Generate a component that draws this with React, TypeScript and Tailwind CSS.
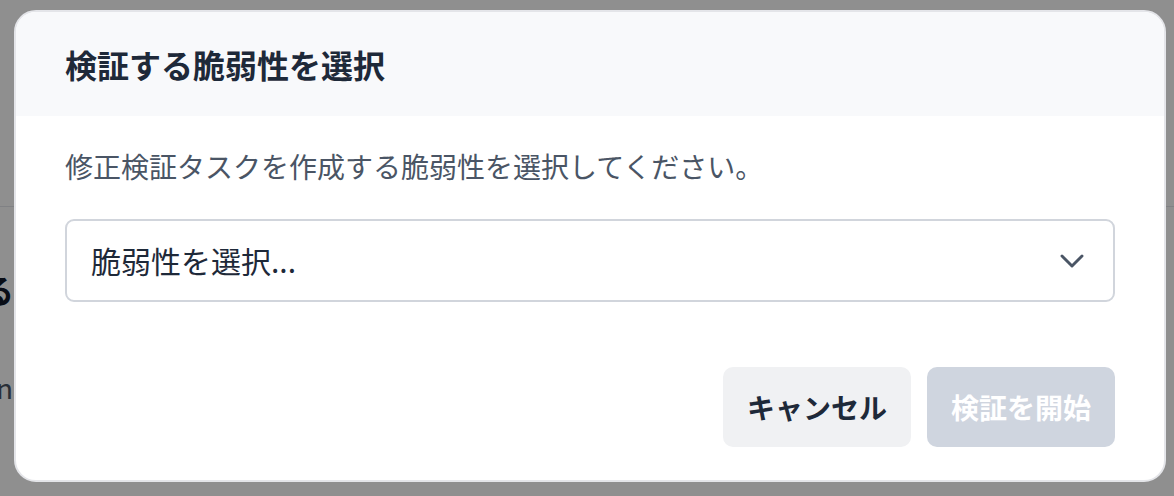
import { ChevronDown } from "lucide-react";

const jp = { fontFamily: '"Noto Sans CJK JP", "Noto Sans", sans-serif' };

const Backdrop = () => {
  return (
    <div className="w-full h-full bg-white">
      <div className="h-[207px] border-b border-gray-200" />
      <div className="pt-[62px] -ml-[18px] text-[32px] font-bold text-gray-900 leading-[40px]">る</div>
      <div className="pt-[60px] -ml-[4px] text-[28px] text-gray-600 leading-[36px]">n</div>
    </div>
  );
};

export default function App() {
  return (
    <div className="relative w-[1174px] h-[496px] overflow-hidden" style={jp}>
      <Backdrop />
      {/* modal overlay */}
      <div className="absolute inset-0 bg-black/[0.44] pl-[14px] pt-[10px]">
        <div className="w-[1152px] h-[472px] bg-white rounded-[22px] border-2 border-[#e4e5e9] overflow-hidden flex flex-col">
          <div className="h-[104px] bg-[#f8f9fb] flex items-center px-[49px] shrink-0">
            <h2 className="text-[32px] font-bold text-gray-800 leading-none">検証する脆弱性を選択</h2>
          </div>
          <div className="flex flex-col px-[49px] pt-[32px]">
            <p className="text-[28px] text-gray-600 leading-[36px]">
              修正検証タスクを作成する脆弱性を選択してください。
            </p>
            <button className="mt-[35px] h-[83px] w-full rounded-[9px] border-2 border-gray-300 flex items-center justify-between pl-[24px] pr-[21px] text-left">
              <span className="text-[30px] text-gray-800">脆弱性を選択...</span>
              <ChevronDown className="w-[40px] h-[40px] text-gray-600" strokeWidth={1.75} />
            </button>
            <div className="flex justify-end gap-[16px] mt-[65px]">
              <button className="w-[188px] h-[80px] rounded-[10px] bg-[#f0f1f3] text-[28px] font-bold text-gray-800">
                キャンセル
              </button>
              <button className="w-[188px] h-[80px] rounded-[10px] bg-[#cfd5df] text-[28px] font-bold text-white" disabled>
                検証を開始
              </button>
            </div>
          </div>
        </div>
      </div>
    </div>
  );
}
